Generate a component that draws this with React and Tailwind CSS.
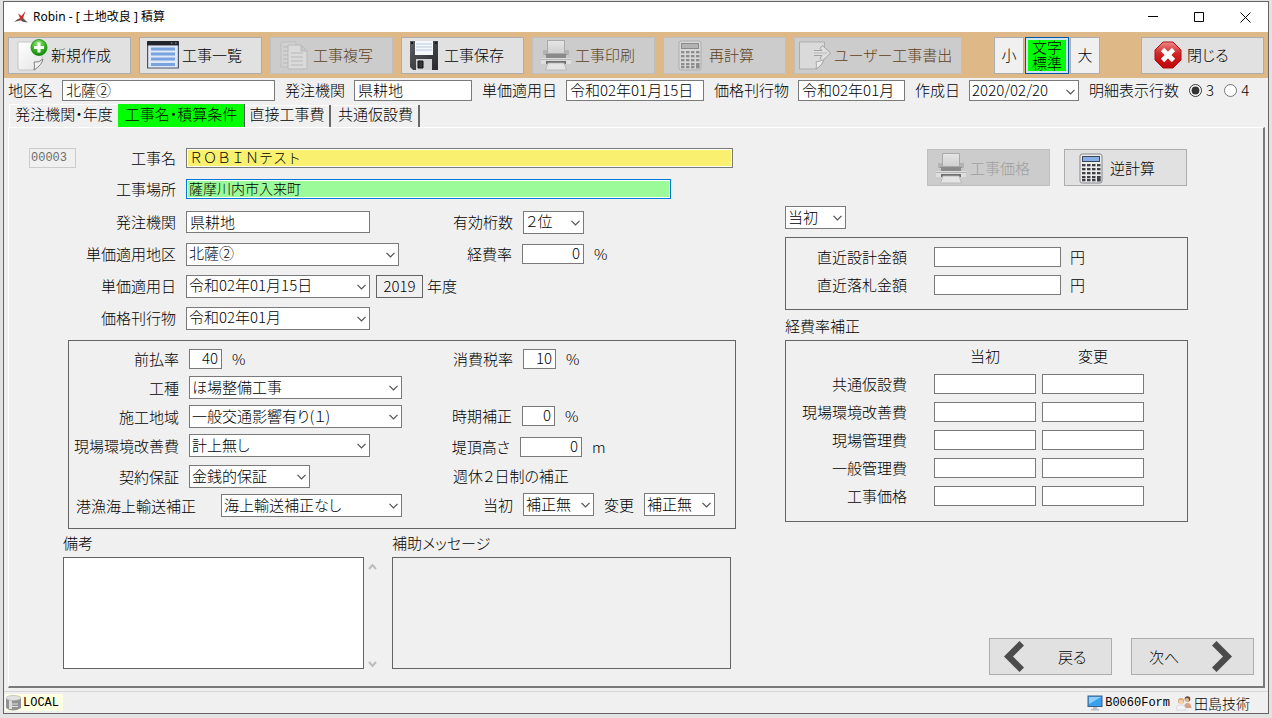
import React, { useEffect, useRef } from "react";

const field = "border border-[#7a7a7a] bg-white text-[15px] leading-[18px] text-black outline-none rounded-none";

function Icon({ children }) {
  return (
    <svg viewBox="0 0 32 32" className="h-8 w-8 shrink-0" aria-hidden="true">
      {children}
    </svg>
  );
}

function NewIcon() {
  return (
    <Icon>
      <defs>
        <linearGradient id="page" x1="0" y1="0" x2="1" y2="1">
          <stop offset="0" stopColor="#fff" />
          <stop offset="1" stopColor="#e4e4e4" />
        </linearGradient>
        <radialGradient id="green" cx="0.45" cy="0.25" r="0.8">
          <stop offset="0" stopColor="#9be37a" />
          <stop offset="0.6" stopColor="#2fb01c" />
          <stop offset="1" stopColor="#0d7a06" />
        </radialGradient>
      </defs>
      <path d="M2 3h24v17q-1 5-7 11H4q-2 0-2-2z" fill="url(#page)" stroke="#bdbdbd" strokeWidth="0.8" />
      <path d="M18 31q1-4 0-8 5 1 9-3-1 6-9 11z" fill="#f0f0f0" stroke="#777" strokeWidth="0.9" />
      <circle cx="23" cy="8.500" r="8" fill="url(#green)" stroke="#148a0b" strokeWidth="0.8" />
      <path d="M23 3.500v10M18 8.500h10" stroke="#fff" strokeWidth="3" />
    </Icon>
  );
}

function ListIcon() {
  return (
    <Icon>
      <path d="M0 3q0-1 1-1h30q1 0 1 1v26.500H0z" fill="#4c5568" />
      <path d="M0 3q0-1 1-1h30q1 0 1 1v3.500H0z" fill="#22262e" />
      <path d="M1.200 6.500h29.600v22H1.200z" fill="#dfe9f8" />
      <path d="M4 8.500h24v3H4zM4 13.500h24v3H4zM4 18.500h24v3H4zM4 24h24v3H4z" fill="#79a2de" />
      <path d="M24 4h1.500M28 4h1.500" stroke="#999" />
    </Icon>
  );
}

function CopyIcon() {
  return (
    <Icon>
      <path d="M3 3h15v25H3z" fill="#d2d2d2" stroke="#bdbdbd" />
      <path d="M5 8h9M5 12h9M5 16h9M5 20h9M5 24h9" stroke="#c0c0c0" strokeWidth="1.5" />
      <path d="M10 6h13l6 6v18H10z" fill="#dadada" stroke="#bababa" />
      <path d="M23 6v6h6z" fill="#c8c8c8" stroke="#b8b8b8" />
      <path d="M13 14h12M13 18h12M13 22h12M13 26h12" stroke="#c4c4c4" strokeWidth="1.5" />
    </Icon>
  );
}

function SaveIcon() {
  return (
    <Icon>
      <defs>
        <linearGradient id="disk" x1="0" y1="0" x2="1" y2="1">
          <stop offset="0" stopColor="#5a5d61" />
          <stop offset="1" stopColor="#27292c" />
        </linearGradient>
      </defs>
      <path d="M1 2h28v29H4l-3-3z" fill="url(#disk)" />
      <path d="M6 2h18v14H6z" fill="#f5f8fb" />
      <path d="M7 5h16M7 8h16M7 11h16" stroke="#b9c9dc" strokeWidth="1" />
      <path d="M7 20h16v11H7z" fill="#d0d1d2" />
      <path d="M9 22h5v7H9z" fill="#333" stroke="#111" />
      <path d="M2 3h2v2H2zM26 3h2v2h-2z" fill="#151617" />
    </Icon>
  );
}

function PrinterIcon() {
  return (
    <Icon>
      <defs>
        <linearGradient id="sheet" x1="0" y1="0" x2="0" y2="1">
          <stop offset="0" stopColor="#e6e6e6" />
          <stop offset="1" stopColor="#cfcfcf" />
        </linearGradient>
      </defs>
      <path d="M3 11h5v5H3zM24 11h5v5h-5z" fill="#b2b2b2" />
      <path d="M7.500 1.500h17v13h-17z" fill="url(#sheet)" stroke="#a9a9a9" />
      <path d="M5 15h22v4H5z" fill="#8a8a8a" />
      <path d="M1 16h5v3H1zM26 16h5v3h-5z" fill="#c9c9c9" />
      <path d="M1 19h30v6H1z" fill="#dedede" />
      <path d="M1 20.500h30" stroke="#b5b5b5" />
      <path d="M6 22h20v3H6z" fill="#6f6f6f" />
      <path d="M8 24h16l2.500 7h-21z" fill="#e4e4e4" stroke="#b4b4b4" strokeWidth="0.8" />
    </Icon>
  );
}

function CalcIcon({ muted }) {
  const key = muted ? "#8d8d8d" : "#3f4145";
  return (
    <Icon>
      <rect x="5" y="2" width="22" height="29" rx="2" fill={muted ? "#d8d8d8" : "#ececec"} stroke={muted ? "#adadad" : "#85878c"} />
      <rect x="7.500" y="4.500" width="17" height="5" fill={muted ? "#b3b3b3" : "#88aee8"} stroke={muted ? "#8a8a8a" : "#3c4658"} />
      {[12, 16, 20, 24, 27].map((y) =>
        [7, 12, 17, 22].map((x) => (
          <rect key={x + "-" + y} x={x} y={y} width="3.500" height="2.300" fill={key} />
        ))
      )}
      <rect x="22" y="24" width="3.500" height="5.300" fill={key} />
    </Icon>
  );
}

function ExportIcon() {
  return (
    <Icon>
      <path d="M0.500 3h25v16q-1 6-8 11h-17z" fill="#dadada" stroke="#adadad" />
      <path d="M17 30q1-4 0-7 5 0 8-4-1 7-8 11z" fill="#ececec" stroke="#999" strokeWidth="0.8" />
      <path d="M15 11.500h8l-2-2 2.500-3L31.500 14 23.500 22 21 19l2-2.500h-8" fill="#dfdfdf" stroke="#a2a2a2" />
      <path d="M15 14h13" stroke="#b5b5b5" />
    </Icon>
  );
}

function StopIcon() {
  return (
    <Icon>
      <defs>
        <linearGradient id="red" x1="0" y1="0" x2="0" y2="1">
          <stop offset="0" stopColor="#e88" />
          <stop offset="0.45" stopColor="#cf2526" />
          <stop offset="1" stopColor="#c00508" />
        </linearGradient>
      </defs>
      <path d="M11 3h10l8 8v10l-8 8H11l-8-8V11z" fill="url(#red)" stroke="#b01013" />
      <path d="M10.500 10.500l11 11M21.500 10.500l-11 11" stroke="#fff" strokeWidth="4.600" />
    </Icon>
  );
}

function Arrow({ right }) {
  return (
    <svg viewBox="0 0 20 31" className="h-[31px] w-5 shrink-0" aria-hidden="true">
      <path d={right ? "M4.500 0L20 15.500 4.500 31 0 26.500 11 15.500 0 4.500z" : "M15.500 0L0 15.500 15.500 31 20 26.500 9 15.500 20 4.500z"} fill="#4b4b4b" />
    </svg>
  );
}

function ToolButton({ icon, children, disabled, wide, shift, gray }) {
  return (
    <button
      type="button"
      disabled={disabled}
      className={
        "flex h-[37px] shrink-0 items-center gap-[3px] whitespace-nowrap border text-left text-[15px] leading-5 " +
        (wide ? "w-[168px] pl-1 " : shift ? "w-[123px] pl-[10px] " : "w-[123px] pl-[7px] ") +
        (disabled ? "border-[#bfbfbf] bg-[#cccccc] " : "border-[#adadad] bg-[#e1e1e1] ") +
        (disabled ? (gray ? "text-[#a0a0a0]" : "text-[#5f4018]") : "text-black")
      }
    >
      {icon}
      <span>{children}</span>
    </button>
  );
}

function Select({ id, value, width, label, height = "h-[23px]" }) {
  return (
    <span className={"relative flex shrink-0 " + width}>
      <select id={id} aria-label={label} defaultValue={value} className={field + " w-full appearance-none pb-0.5 pl-0.5 " + height}>
        <option>{value}</option>
      </select>
      <svg viewBox="0 0 9 6" className="pointer-events-none absolute top-[9px] right-1 h-1.5 w-[9px]" aria-hidden="true">
        <path d="M0.500 0.800L4.500 4.800 8.500 0.800" fill="none" stroke="#505050" strokeWidth="1.200" />
      </svg>
    </span>
  );
}

function Label({ id, width, children }) {
  return (
    <label htmlFor={id} className={"shrink-0 whitespace-nowrap text-right " + (width || "")}>
      {children}
    </label>
  );
}

function Num({ id, value, width }) {
  return <input id={id} defaultValue={value} className={field + " h-5 shrink-0 px-[3px] pb-[3px] text-right " + width} />;
}

function TopField({ id, label, value, width }) {
  return (
    <div className="flex min-w-0 items-center gap-[9px]">
      <label htmlFor={id} className="shrink-0 whitespace-nowrap">{label}</label>
      <input id={id} readOnly defaultValue={value} className={field + " h-[21px] min-w-0 pb-0.5 pl-[3px] " + width} />
    </div>
  );
}

const tabs = [
  ["発注機関・年度", "w-[109px]"],
  ["工事名・積算条件", "w-[127px]"],
  ["直接工事費", "w-[86px]"],
  ["共通仮設費", "w-[87px]"],
];

const rates = ["共通仮設費", "現場環境改善費", "現場管理費", "一般管理費", "工事価格"];

export default function App() {
  const place = useRef(null);

  useEffect(() => {
    const input = place.current;
    input.focus();
    input.setSelectionRange(input.value.length, input.value.length);
  }, []);

  return (
    <div className="flex min-h-screen flex-col bg-[#e2e2e2] px-[3px] pt-px pb-1 text-[15px] leading-5 font-light text-black [font-feature-settings:'palt']">
      <div className="flex flex-1 flex-col border border-[#646464] bg-[#f0f0f0] font-['Noto_Sans_CJK_JP',sans-serif]">
        <header className="flex h-[30px] items-center bg-white pl-2.5 font-['Noto_Sans','Noto_Sans_CJK_JP',sans-serif] text-[12px]">
          <svg viewBox="0 0 14 12" className="h-3 w-3.5" aria-hidden="true">
            <path d="M11.500 0L7.500 5 4 2.500 6 7 1 10.500 8.500 9z" fill="#c62f22" />
            <path d="M0 11L4 8l2 .5-1.500 1zM9 7l3 3 2 1.500-4-.5-3-1z" fill="#555" />
          </svg>
          <h1 className="ml-[5px] flex-1 font-normal">Robin - [ 土地改良 ] 積算</h1>
          <button type="button" aria-label="最小化" className="flex h-full w-[46px] items-center justify-center">
            <svg viewBox="0 0 11 11" className="h-[11px] w-[11px]"><path d="M0 4.500h10" stroke="#000" /></svg>
          </button>
          <button type="button" aria-label="最大化" className="flex h-full w-[46px] items-center justify-center">
            <svg viewBox="0 0 11 11" className="h-[11px] w-[11px]"><path d="M.5.5h9v9h-9z" fill="none" stroke="#000" /></svg>
          </button>
          <button type="button" aria-label="閉じる" className="flex h-full w-[46px] items-center justify-center">
            <svg viewBox="0 0 11 11" className="h-[11px] w-[11px]"><path d="M.5.5l10 10M10.500.5l-10 10" stroke="#000" /></svg>
          </button>
        </header>

        <nav className="flex h-[46px] items-center gap-2 bg-[#deb887] px-1">
          <ToolButton icon={<NewIcon />}>新規作成</ToolButton>
          <ToolButton icon={<ListIcon />}>工事一覧</ToolButton>
          <ToolButton icon={<CopyIcon />} disabled>工事複写</ToolButton>
          <ToolButton icon={<SaveIcon />}>工事保存</ToolButton>
          <ToolButton icon={<PrinterIcon />} disabled>工事印刷</ToolButton>
          <ToolButton icon={<CalcIcon muted />} disabled shift>再計算</ToolButton>
          <ToolButton icon={<ExportIcon />} disabled wide>ユーザー工事書出</ToolButton>
          <div className="ml-6 flex gap-px">
            <button type="button" className="h-[37px] w-[30px] border border-[#adadad] bg-[#f0f0f0]">小</button>
            <button type="button" className="h-[37px] w-11 border border-[#00569f] bg-[#cce4f7] p-0.5">
              <span className="flex h-full flex-col items-center justify-center bg-[#00ff00] text-[15px] leading-4">
                <span>文字</span>
                <span>標準</span>
              </span>
            </button>
            <button type="button" className="h-[37px] w-[30px] border border-[#adadad] bg-[#f0f0f0]">大</button>
          </div>
          <div className="ml-auto">
            <ToolButton icon={<StopIcon />} shift>閉じる</ToolButton>
          </div>
        </nav>

        <div className="flex h-6 items-center gap-2.5 pl-1">
          <TopField id="district" label="地区名" value="北薩②" width="w-[213px]" />
          <TopField id="agency" label="発注機関" value="県耕地" width="w-[118px]" />
          <TopField id="priceDate" label="単価適用日" value="令和02年01月15日" width="w-[138px]" />
          <TopField id="journal" label="価格刊行物" value="令和02年01月" width="w-[107px]" />
          <div className="flex shrink-0 items-center gap-[9px]">
            <label htmlFor="created" className="shrink-0">作成日</label>
            <Select id="created" value="2020/02/20" width="w-[110px]" height="h-[21px]" />
          </div>
          <fieldset className="flex shrink-0 items-center">
            <legend className="float-left mr-2.5">明細表示行数</legend>
            <label className="flex items-center gap-1">
              <input type="radio" name="lines" defaultChecked className="h-[13px] w-[13px] accent-[#333333]" />3
            </label>
            <label className="ml-2.5 flex items-center gap-1">
              <input type="radio" name="lines" className="h-[13px] w-[13px]" />4
            </label>
          </fieldset>
        </div>

        <div role="tablist" className="mt-0.5 flex h-[23px] pl-[5px]">
          {tabs.map(([name, width], i) => (
            <button
              key={name}
              type="button"
              role="tab"
              aria-selected={i === 1}
              className={
                "flex items-start justify-center whitespace-nowrap " + width +
                (i === 1
                  ? " border-r border-[#555555] bg-[#00ff00]"
                  : i === 0
                    ? " border-t border-l border-white leading-[18px]"
                    : " mt-px mr-0.5 border-r-2 border-[#696969] leading-[18px] shadow-[inset_0_1px_#ffffff]")
              }
            >
              {name}
            </button>
          ))}
        </div>

        <main className="mr-[3px] ml-1 flex flex-1 border-t border-r-2 border-b-2 border-l border-t-white border-r-[#7a7a7a] border-b-[#7a7a7a] border-l-white">
          <section className="flex min-w-0 flex-1 flex-col pt-5 pr-[49px] pb-[17px]">
            <div className="mr-[3px] flex h-5 items-center">
              <input aria-label="番号" disabled defaultValue="00003" className="ml-5 h-5 w-[47px] border border-[#cccccc] pl-px font-['Liberation_Mono',monospace] text-[12px] text-[#6d6d6d]" />
              <Label id="name" width="w-[100px]">工事名</Label>
              <input id="name" defaultValue="ＲＯＢＩＮテスト" className="ml-2.5 h-5 min-w-0 flex-1 border border-[#7a7a7a] bg-[#faf070] pb-[3px] pl-0.5 text-[14px] leading-4 shadow-[inset_0_0_0_1px_#ffffff] outline-none [font-feature-settings:normal]" />
            </div>
            <div className="mt-[11px] mr-[65px] flex h-5 items-center gap-2.5">
              <Label id="place" width="w-[167px]">工事場所</Label>
              <input ref={place} id="place" defaultValue="薩摩川内市入来町" className="h-5 min-w-0 flex-1 border border-[#0078d7] bg-[#9bfb98] pb-[3px] pl-0.5 text-[14px] leading-4 shadow-[inset_0_0_0_1px_#ffffff] outline-none" />
            </div>
            <div className="mt-[11px] flex h-6 items-center gap-2.5">
              <Label id="agency2" width="w-[167px]">発注機関</Label>
              <input id="agency2" defaultValue="県耕地" className={field + " h-[22px] w-[184px] pb-0.5 pl-[3px]"} />
              <Label id="digits" width="w-[133px]">有効桁数</Label>
              <Select id="digits" value="２位" width="w-[61px]" />
            </div>
            <div className="mt-2 flex h-6 items-center gap-2.5">
              <Label id="area" width="w-[167px]">単価適用地区</Label>
              <Select id="area" value="北薩②" width="w-[213px]" />
              <Label id="expense" width="w-[103px]">経費率</Label>
              <Num id="expense" value="0" width="w-[62px]" />
              <span>%</span>
            </div>
            <div className="mt-2 flex h-6 items-center">
              <Label id="applied" width="w-[167px] mr-2.5">単価適用日</Label>
              <Select id="applied" value="令和02年01月15日" width="w-[184px]" />
              <input id="year" readOnly defaultValue="2019" className="ml-1.5 h-[23px] w-[47px] border border-[#646464] pb-px text-center text-[15px] outline-none" />
              <label htmlFor="year" className="ml-1">年度</label>
            </div>
            <div className="mt-2 flex h-6 items-center gap-2.5">
              <Label id="journal2" width="w-[167px]">価格刊行物</Label>
              <Select id="journal2" value="令和02年01月" width="w-[184px]" />
            </div>

            <div className="mt-2.5 ml-[59px] flex border border-[#646464] pt-[3px] pb-2">
              <div className="w-[333px] shrink-0">
                <div className="flex h-[29px] items-center gap-2.5">
                  <Label id="advance" width="w-[110px]">前払率</Label>
                  <Num id="advance" value="40" width="w-[33px]" />
                  <span>%</span>
                </div>
                <div className="flex h-[29px] items-center gap-2.5">
                  <Label id="kind" width="w-[110px]">工種</Label>
                  <Select id="kind" value="ほ場整備工事" width="w-[213px]" />
                </div>
                <div className="flex h-[29px] items-center gap-2.5">
                  <Label id="region" width="w-[110px]">施工地域</Label>
                  <Select id="region" value="一般交通影響有り(１)" width="w-[213px]" />
                </div>
                <div className="flex h-[29px] items-center gap-2.5">
                  <Label id="env" width="w-[110px]">現場環境改善費</Label>
                  <Select id="env" value="計上無し" width="w-[181px]" />
                </div>
                <div className="mt-0.5 flex h-[29px] items-center gap-2.5">
                  <Label id="bond" width="w-[110px]">契約保証</Label>
                  <Select id="bond" value="金銭的保証" width="w-[121px]" />
                </div>
                <div className="flex h-[29px] items-center justify-between pl-[7px]">
                  <Label id="sea">港漁海上輸送補正</Label>
                  <Select id="sea" value="海上輸送補正なし" width="w-[181px]" />
                </div>
              </div>
              <div className="min-w-0 flex-1">
                <div className="flex h-[29px] items-center gap-2.5">
                  <Label id="tax" width="w-[111px]">消費税率</Label>
                  <Num id="tax" value="10" width="w-[33px]" />
                  <span>%</span>
                </div>
                <div className="mt-7 flex h-[29px] items-center gap-2.5">
                  <Label id="season" width="w-[110px]">時期補正</Label>
                  <Num id="season" value="0" width="w-[33px]" />
                  <span>%</span>
                </div>
                <div className="mt-0.5 flex h-[29px] items-center gap-2.5">
                  <Label id="height" width="w-[108px]">堤頂高さ</Label>
                  <Num id="height" value="0" width="w-[62px]" />
                  <span>m</span>
                </div>
                <p className="h-[29px] pl-[51px] leading-[29px]">週休２日制の補正</p>
                <div className="flex h-[29px] items-center gap-2.5">
                  <Label id="w1" width="w-[111px]">当初</Label>
                  <Select id="w1" value="補正無" width="w-[71px]" />
                  <Label id="w2">変更</Label>
                  <Select id="w2" value="補正無" width="w-[71px]" />
                </div>
              </div>
            </div>

            <div className="mt-1 mr-[5px] ml-[54px] flex flex-1">
              <div className="flex w-[301px] flex-col gap-1">
                <label htmlFor="notes">備考</label>
                <textarea id="notes" className="min-h-28 flex-1 resize-none border border-[#646464] bg-white p-1 outline-none" />
              </div>
              <div className="mt-[29px] flex w-7 flex-col items-start justify-between py-px pl-1">
                <svg viewBox="0 0 9 7" className="h-[7px] w-[9px]" aria-hidden="true"><path d="M1 6l3.500-4L8 6" fill="none" stroke="#bcbcbc" strokeWidth="2" /></svg>
                <svg viewBox="0 0 9 7" className="h-[7px] w-[9px]" aria-hidden="true"><path d="M1 1l3.500 4L8 1" fill="none" stroke="#bcbcbc" strokeWidth="2" /></svg>
              </div>
              <div className="flex min-w-0 flex-1 flex-col gap-1">
                <label htmlFor="message">補助メッセージ</label>
                <textarea id="message" readOnly className="min-h-28 flex-1 resize-none border border-[#646464] p-1 outline-none" />
              </div>
            </div>
          </section>

          <section className="mr-[9px] flex w-[469px] shrink-0 flex-col pt-[21px] pb-[11px]">
            <div className="mr-[67px] flex justify-end gap-3.5">
              <ToolButton icon={<PrinterIcon />} disabled gray>工事価格</ToolButton>
              <ToolButton icon={<CalcIcon />} shift>逆計算</ToolButton>
            </div>
            <div className="mt-5 flex">
              <Select id="stage" label="区分" value="当初" width="w-[61px]" />
            </div>
            <div className="mt-2 mr-[66px] flex h-[73px] flex-col gap-2 border border-[#646464] pt-[9px]">
              <div className="flex h-5 items-center">
                <Label id="design" width="w-[121px] mr-[27px]">直近設計金額</Label>
                <Num id="design" value="" width="w-[127px]" />
                <span className="ml-[9px]">円</span>
              </div>
              <div className="flex h-5 items-center">
                <Label id="bid" width="w-[121px] mr-[27px]">直近落札金額</Label>
                <Num id="bid" value="" width="w-[127px]" />
                <span className="ml-[9px]">円</span>
              </div>
            </div>
            <h2 className="mt-1.5 mb-1 font-light">経費率補正</h2>
            <div className="mr-[66px] border border-[#646464] pt-[3px] pb-[11px]">
              <table className="table-fixed border-collapse">
                <thead>
                  <tr className="h-[26px]">
                    <td className="w-[148px]" />
                    <th scope="col" className="w-[108px] p-0 pr-1.5 pb-0.5 font-light">当初</th>
                    <th scope="col" className="w-[108px] p-0 pr-1.5 pb-0.5 font-light">変更</th>
                  </tr>
                </thead>
                <tbody>
                  {rates.map((name) => (
                    <tr key={name} className="h-7">
                      <th scope="row" className="p-0 pr-[27px] text-right font-light">{name}</th>
                      <td className="p-0"><input aria-label={name + " 当初"} className={field + " block h-5 w-[102px]"} /></td>
                      <td className="p-0"><input aria-label={name + " 変更"} className={field + " block h-5 w-[102px]"} /></td>
                    </tr>
                  ))}
                </tbody>
              </table>
            </div>
            <div className="mt-auto flex justify-end gap-[19px]">
              <button type="button" className="flex h-[37px] w-[123px] items-center gap-[34px] border border-[#adadad] bg-[#e1e1e1] pl-3.5">
                <Arrow />戻る
              </button>
              <button type="button" className="flex h-[37px] w-[123px] items-center justify-between border border-[#adadad] bg-[#e1e1e1] pr-[21px] pl-[17px]">
                次へ<Arrow right />
              </button>
            </div>
          </section>
        </main>

        <footer className="mt-[3px] flex h-[22px] items-center border-t border-[#d7d7d7] pr-[18px] pl-px">
          <div className="flex h-[17px] w-[58px] items-center gap-0.5 bg-[#ffffe1] pl-px font-['Liberation_Mono',monospace] text-[12px]">
            <svg viewBox="0 0 15 16" className="h-4 w-[15px]" aria-hidden="true">
              <path d="M0 3v10q7 5 15 0V3z" fill="#929292" />
              <path d="M3 5h3v9H3z" fill="#dcdcdc" />
              <path d="M6 9h6M6 11.500h6" stroke="#e0e0e0" />
              <ellipse cx="7.500" cy="3" rx="7.500" ry="2.500" fill="#e3e3e3" stroke="#aaa" strokeWidth="0.600" />
            </svg>
            LOCAL
          </div>
          <div className="ml-auto flex items-center">
            <svg viewBox="0 0 16 16" className="mr-0.5 h-4 w-4" aria-hidden="true">
              <rect x="1" y="1" width="14" height="10.500" fill="#38a0ec" stroke="#3d5f86" />
              <path d="M2 2h12L2 9z" fill="#8fd0fa" />
              <path d="M6 12h4v2h2v1.500H4V14h2z" fill="#b9bec5" />
            </svg>
            <span className="font-['Liberation_Mono',monospace] text-[12px]">B0060Form</span>
            <svg viewBox="0 0 16 16" className="mr-0.5 ml-1.5 h-4 w-4" aria-hidden="true">
              <circle cx="11.500" cy="4" r="2.800" fill="#6b4a35" />
              <circle cx="11" cy="5" r="2" fill="#e7b98f" />
              <path d="M8 13q0-5 3.500-5T15.500 13z" fill="#d4a184" />
              <circle cx="5" cy="6" r="3" fill="#d7a96d" />
              <circle cx="5" cy="7" r="2.200" fill="#f4d0ac" />
              <path d="M0 15q0-5 5-5t5 5z" fill="#f2f3f7" stroke="#c5cad6" strokeWidth="0.600" />
            </svg>
            <span className="text-[14px]">田島技術</span>
          </div>
        </footer>
      </div>
    </div>
  );
}
